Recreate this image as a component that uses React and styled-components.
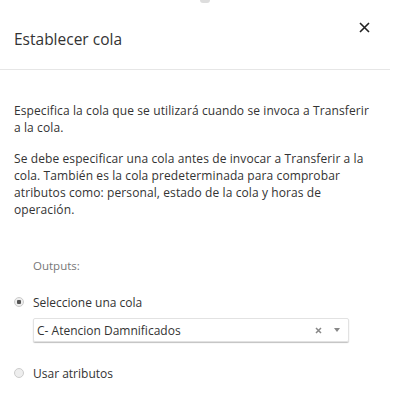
import React from "react";
import styled, { createGlobalStyle } from "styled-components";

const GlobalStyle = createGlobalStyle`
  html, body {
    margin: 0;
    padding: 0;
    background: #fff;
  }
  body {
    font-family: "Open Sans", "Liberation Sans", sans-serif;
    color: #333;
  }
`;

const Panel = styled.div`
  width: 408px;
  height: 412px;
  overflow: hidden;
  background: #fff;
`;

const Notch = styled.div`
  width: 10px;
  height: 3px;
  margin-left: 200px;
  background: #ddd;
  border-radius: 0 0 4px 4px;
`;

const Header = styled.div`
  display: flex;
  justify-content: space-between;
  align-items: flex-start;
  width: 390px;
  height: 67px;
  box-sizing: border-box;
  padding: 19px 20px 0 14px;
  border-bottom: 1px solid #e6e6e6;
`;

const Title = styled.h1`
  margin: 8px 0 0;
  font-size: 15.5px;
  line-height: 19px;
  font-weight: 400;
  color: #333;
`;

const CloseButton = styled.span`
  display: flex;
  color: #222;
  cursor: pointer;
`;

const Body = styled.div`
  padding: 32px 36px 0 14px;
`;

const Paragraph = styled.p`
  margin: 0 0 14px;
  font-size: 12px;
  line-height: 17px;
  letter-spacing: 0.1px;
  color: #333;
`;

const OutputsLabel = styled.div`
  margin: 40px 0 0 19px;
  font-size: 11.5px;
  color: #777;
`;

const Options = styled.div`
  display: flex;
  flex-direction: column;
  margin-top: 18px;
`;

const RadioRow = styled.label`
  display: flex;
  align-items: center;
  gap: 9px;
  height: 22px;
  font-size: 12px;
  color: #333;
`;

const RadioDot = styled.span`
  width: 8px;
  height: 8px;
  border-radius: 50%;
  border: 1px solid #ccc;
  background: ${(p) => (p.checked ? "radial-gradient(circle, #555 0 2px, #eee 2.5px)" : "#eee")};
`;

const SelectBox = styled.div`
  display: flex;
  align-items: center;
  margin: 5px 0 20px 19px;
  width: 316px;
  height: 24px;
  box-sizing: border-box;
  padding: 0 8px 0 3px;
  border: 1px solid #e2e2e2;
  border-radius: 2px;
  box-shadow: 0 1px 1px rgba(0, 0, 0, 0.25);
  font-size: 12px;
  color: #333;
`;

const SelectValue = styled.span`
  flex: 1;
`;

const SelectIcon = styled.span`
  display: flex;
  margin-left: 12px;
  color: #888;
`;

const Close = () => (
  <svg width="11" height="11" viewBox="0 0 11 11">
    <path d="M1 1L10 10M10 1L1 10" stroke="currentColor" strokeWidth="1.6" />
  </svg>
);

export default function App() {
  return (
    <Panel>
      <GlobalStyle />
      <Notch />
      <Header>
        <Title>Establecer cola</Title>
        <CloseButton>
          <Close />
        </CloseButton>
      </Header>
      <Body>
        <Paragraph>
          Especifica la cola que se utilizará cuando se invoca a Transferir a la cola.
        </Paragraph>
        <Paragraph>
          Se debe especificar una cola antes de invocar a Transferir a la cola. También es la cola
          predeterminada para comprobar atributos como: personal, estado de la cola y horas de
          operación.
        </Paragraph>
        <OutputsLabel>Outputs:</OutputsLabel>
        <Options>
          <RadioRow>
            <RadioDot checked />
            Seleccione una cola
          </RadioRow>
          <SelectBox>
            <SelectValue>C- Atencion Damnificados</SelectValue>
            <SelectIcon>
              <svg width="7" height="7" viewBox="0 0 7 7">
                <path d="M1 1L6 6M6 1L1 6" stroke="currentColor" strokeWidth="1.5" />
              </svg>
            </SelectIcon>
            <SelectIcon>
              <svg width="6" height="4" viewBox="0 0 6 4">
                <path d="M0 0H6L3 4Z" fill="currentColor" />
              </svg>
            </SelectIcon>
          </SelectBox>
          <RadioRow>
            <RadioDot />
            Usar atributos
          </RadioRow>
        </Options>
      </Body>
    </Panel>
  );
}
